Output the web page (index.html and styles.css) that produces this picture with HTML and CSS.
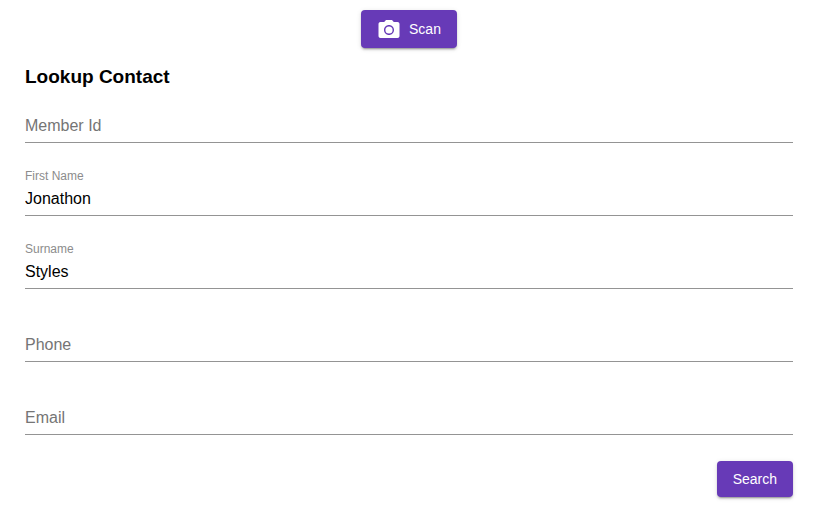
FILE: index.html
```html
<!DOCTYPE html>
<html lang="en">
<head>
    <meta charset="UTF-8">
    <meta name="viewport" content="width=device-width, initial-scale=1.0">
    <title>Lookup Contact</title>
    <link rel="stylesheet" href="styles.css">
</head>
<body>
    <main class="lookup">
        <button type="button" class="btn btn-scan">
            <svg class="btn-icon" viewBox="0 0 24 24" aria-hidden="true">
                <circle cx="12" cy="13" r="3.6"/>
                <path d="M9 3L7.2 5H3.5c-1.1 0-2 .9-2 2v12c0 1.1.9 2 2 2h17c1.1 0 2-.9 2-2V7c0-1.1-.9-2-2-2h-3.7L15 3H9zm3 15c-2.76 0-5-2.24-5-5s2.24-5 5-5 5 2.24 5 5-2.24 5-5 5z"/>
            </svg>
            Scan
        </button>

        <h1 class="title">Lookup Contact</h1>

        <form class="lookup-form">
            <div class="field">
                <input type="text" id="member-id" placeholder=" ">
                <label for="member-id">Member Id</label>
            </div>
            <div class="field">
                <input type="text" id="first-name" placeholder=" " value="Jonathon">
                <label for="first-name">First Name</label>
            </div>
            <div class="field">
                <input type="text" id="surname" placeholder=" " value="Styles">
                <label for="surname">Surname</label>
            </div>
            <div class="field">
                <input type="tel" id="phone" placeholder=" ">
                <label for="phone">Phone</label>
            </div>
            <div class="field">
                <input type="email" id="email" placeholder=" ">
                <label for="email">Email</label>
            </div>
            <button type="submit" class="btn btn-search">Search</button>
        </form>
    </main>
</body>
</html>
```

FILE: styles.css
```css
:root {
    --primary: #673ab7;
    --line: #949494;
    --hint: #757575;
}

* {
    margin: 0;
    padding: 0;
    box-sizing: border-box;
    font-family: "Liberation Sans", Arial, sans-serif;
}

body {
    background-color: #fff;
    color: #000;
}

.lookup {
    display: flex;
    flex-direction: column;
    padding: 10px 36px 10px 25px;
}

.title {
    margin: 17px 0 6px;
    font-size: 19px;
    line-height: 24px;
}

/* Buttons */
.btn {
    display: flex;
    align-items: center;
    gap: 8px;
    height: 36px;
    padding: 0 16px;
    border: none;
    border-radius: 4px;
    background-color: var(--primary);
    color: #fff;
    font-size: 14px;
    font-weight: 500;
    cursor: pointer;
    box-shadow: 0 3px 1px -2px rgba(0, 0, 0, 0.2), 0 2px 2px 0 rgba(0, 0, 0, 0.14), 0 1px 5px 0 rgba(0, 0, 0, 0.12);
}

.btn-scan {
    align-self: center;
    height: 38px;
}

.btn-icon {
    width: 24px;
    height: 24px;
    fill: currentColor;
}

/* Form */
.lookup-form {
    display: flex;
    flex-direction: column;
}

.btn-search {
    align-self: flex-end;
    margin-top: 1px;
}

/* The label shares the input's row until the field has a value */
.field {
    display: grid;
    grid-template-columns: 1fr;
    grid-template-rows: 17px 28px;
    margin-bottom: 25px;
    padding-bottom: 2px;
    border-bottom: 1px solid var(--line);
}

.field input,
.field label {
    grid-column: 1;
}

.field input {
    grid-row: 2;
    width: 100%;
    border: none;
    outline: none;
    background: transparent;
    color: #000;
    font-size: 16px;
}

.field label {
    grid-row: 1;
    color: #8c8c8c;
    font-size: 12px;
    line-height: 17px;
    pointer-events: none;
}

.field input:placeholder-shown:not(:focus) + label {
    grid-row: 2;
    color: var(--hint);
    font-size: 16px;
    line-height: 28px;
}
```
